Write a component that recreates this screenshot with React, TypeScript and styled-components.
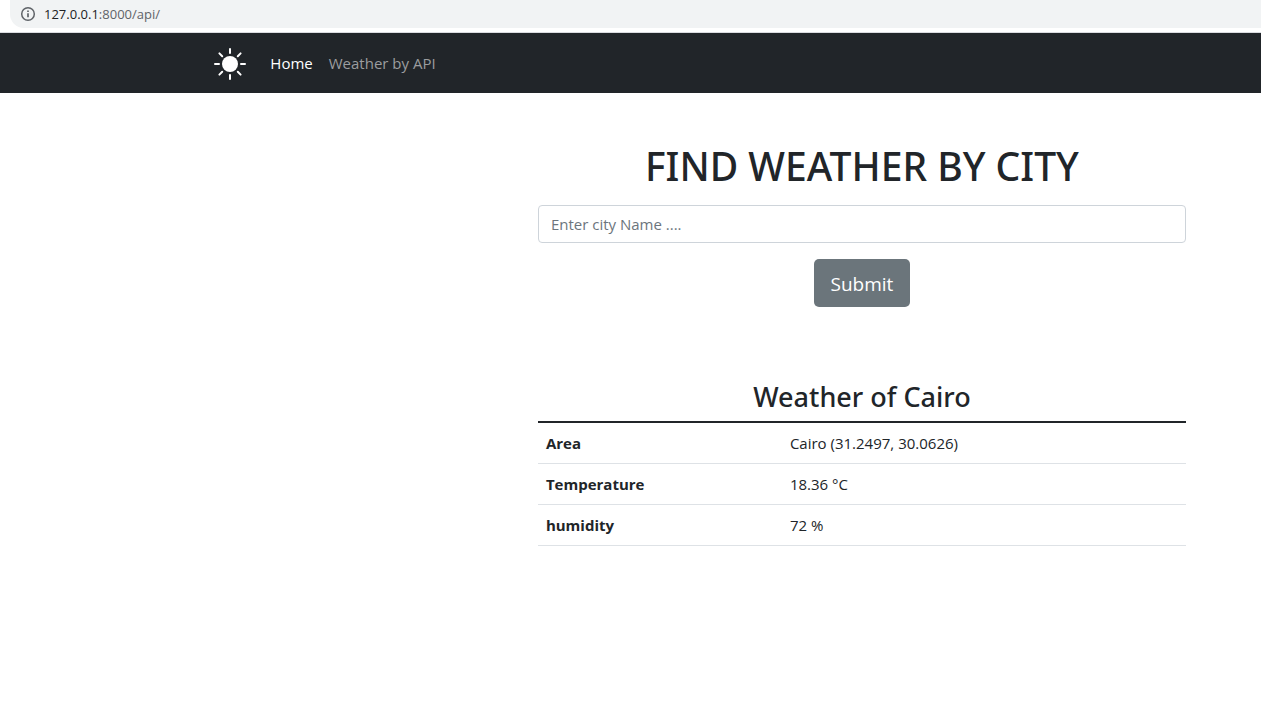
import React from "react";
import styled, { createGlobalStyle } from "styled-components";

const GlobalStyle = createGlobalStyle`
  *, *::before, *::after { box-sizing: border-box; }
  body {
    margin: 0;
    background: #fff;
    color: #212529;
    font-family: "Open Sans", "Noto Sans", sans-serif;
    font-size: 15px;
    line-height: 24px;
  }
`;

const BrowserBar = styled.div`
  height: 33px;
  padding-left: 10px;
  border-bottom: 1px solid #dadce0;
`;

const AddressBox = styled.div`
  display: flex;
  align-items: center;
  gap: 8px;
  height: 28px;
  padding-left: 10px;
  border-radius: 0 0 0 14px;
  background: #f1f3f4;
  color: #5f6368;
  font-size: 13px;
`;

const Host = styled.span`
  color: #202124;
`;

const Navbar = styled.nav`
  display: flex;
  align-items: center;
  gap: 16px;
  min-height: 60px;
  padding: 8px 17%;
  background: #212529;
`;

const Brand = styled.a`
  display: flex;
  padding-top: 2px;
  color: #fff;
`;

const NavList = styled.ul`
  display: flex;
  margin: 0;
  padding: 0;
  list-style: none;
`;

const NavLink = styled.a<{ $active?: boolean }>`
  display: block;
  padding: 8px;
  color: ${(p) => (p.$active ? "#fff" : "#9b9d9f")};
  text-decoration: none;
`;

const Main = styled.main`
  display: grid;
  grid-template-columns: 5fr 7fr;
  padding: 48px 75px;
`;

const Content = styled.div`
  grid-column: 2;
`;

const SearchForm = styled.form`
  display: flex;
  flex-direction: column;
  align-items: center;
  gap: 16px;
  margin-bottom: 72px;
`;

const Title = styled.h1`
  margin: 0;
  padding-top: 2px;
  font-family: "Noto Sans", "Open Sans", sans-serif;
  font-size: 39px;
  font-weight: 500;
  line-height: 46px;
  text-align: center;
`;

const CityInput = styled.input`
  width: 100%;
  height: 38px;
  padding: 6px 12px;
  border: 1px solid #ced4da;
  border-radius: 4px;
  background: #fff;
  color: #212529;
  font: inherit;
  &::placeholder {
    color: #6c757d;
    opacity: 1;
  }
`;

const SubmitButton = styled.button`
  height: 48px;
  padding: 9px 17px 7px;
  border: 0;
  border-radius: 5px;
  background: #6b757b;
  color: #fff;
  font-family: inherit;
  font-size: 19px;
  line-height: 32px;
`;

const WeatherTable = styled.table`
  width: 100%;
  border-collapse: collapse;
`;

const Caption = styled.caption`
  padding-bottom: 6px;
  font-family: "Noto Sans", "Open Sans", sans-serif;
  font-size: 27px;
  font-weight: 500;
  line-height: 36px;
`;

const Body = styled.tbody`
  border-top: 2px solid #212529;
`;

const Row = styled.tr`
  border-bottom: 1px solid #dee2e6;
`;

const Label = styled.th`
  width: 244px;
  padding: 8px;
  font-weight: 700;
  text-align: left;
`;

const Value = styled.td`
  padding: 8px;
`;

const readings = [
  { label: "Area", value: "Cairo (31.2497, 30.0626)" },
  { label: "Temperature", value: "18.36 °C" },
  { label: "humidity", value: "72 %" },
];

function InfoIcon() {
  return (
    <svg width="16" height="16" viewBox="0 0 16 16" fill="none" aria-hidden="true">
      <circle cx="8" cy="8" r="6.3" stroke="#5f6368" strokeWidth="1.5" />
      <path d="M8 7.2v4M8 4.4v1.6" stroke="#5f6368" strokeWidth="1.7" />
    </svg>
  );
}

function SunIcon() {
  return (
    <svg width="32" height="32" viewBox="0 0 16 16" fill="none" aria-hidden="true">
      <circle cx="8" cy="8" r="4" fill="currentColor" />
      <path
        d="M8 .5v2M8 13.5v2M.5 8h2M13.5 8h2M2.7 2.7l1.41 1.41M11.89 11.89l1.41 1.41M2.7 13.3l1.41-1.41M11.89 4.11l1.41-1.41"
        stroke="currentColor"
        strokeLinecap="round"
      />
    </svg>
  );
}

export default function App() {
  return (
    <>
      <GlobalStyle />
      <BrowserBar>
        <AddressBox>
          <InfoIcon />
          <span>
            <Host>127.0.0.1</Host>:8000/api/
          </span>
        </AddressBox>
      </BrowserBar>
      <Navbar>
        <Brand href="#" aria-label="Weather">
          <SunIcon />
        </Brand>
        <NavList>
          <li>
            <NavLink href="#" $active>
              Home
            </NavLink>
          </li>
          <li>
            <NavLink href="#">Weather by API</NavLink>
          </li>
        </NavList>
      </Navbar>
      <Main>
        <Content>
          <SearchForm onSubmit={(e) => e.preventDefault()}>
            <Title>FIND WEATHER BY CITY</Title>
            <CityInput type="text" name="city" aria-label="City name" placeholder="Enter city Name ...." />
            <SubmitButton type="submit">Submit</SubmitButton>
          </SearchForm>
          <WeatherTable>
            <Caption>Weather of Cairo</Caption>
            <Body>
              {readings.map((r) => (
                <Row key={r.label}>
                  <Label scope="row">{r.label}</Label>
                  <Value>{r.value}</Value>
                </Row>
              ))}
            </Body>
          </WeatherTable>
        </Content>
      </Main>
    </>
  );
}
